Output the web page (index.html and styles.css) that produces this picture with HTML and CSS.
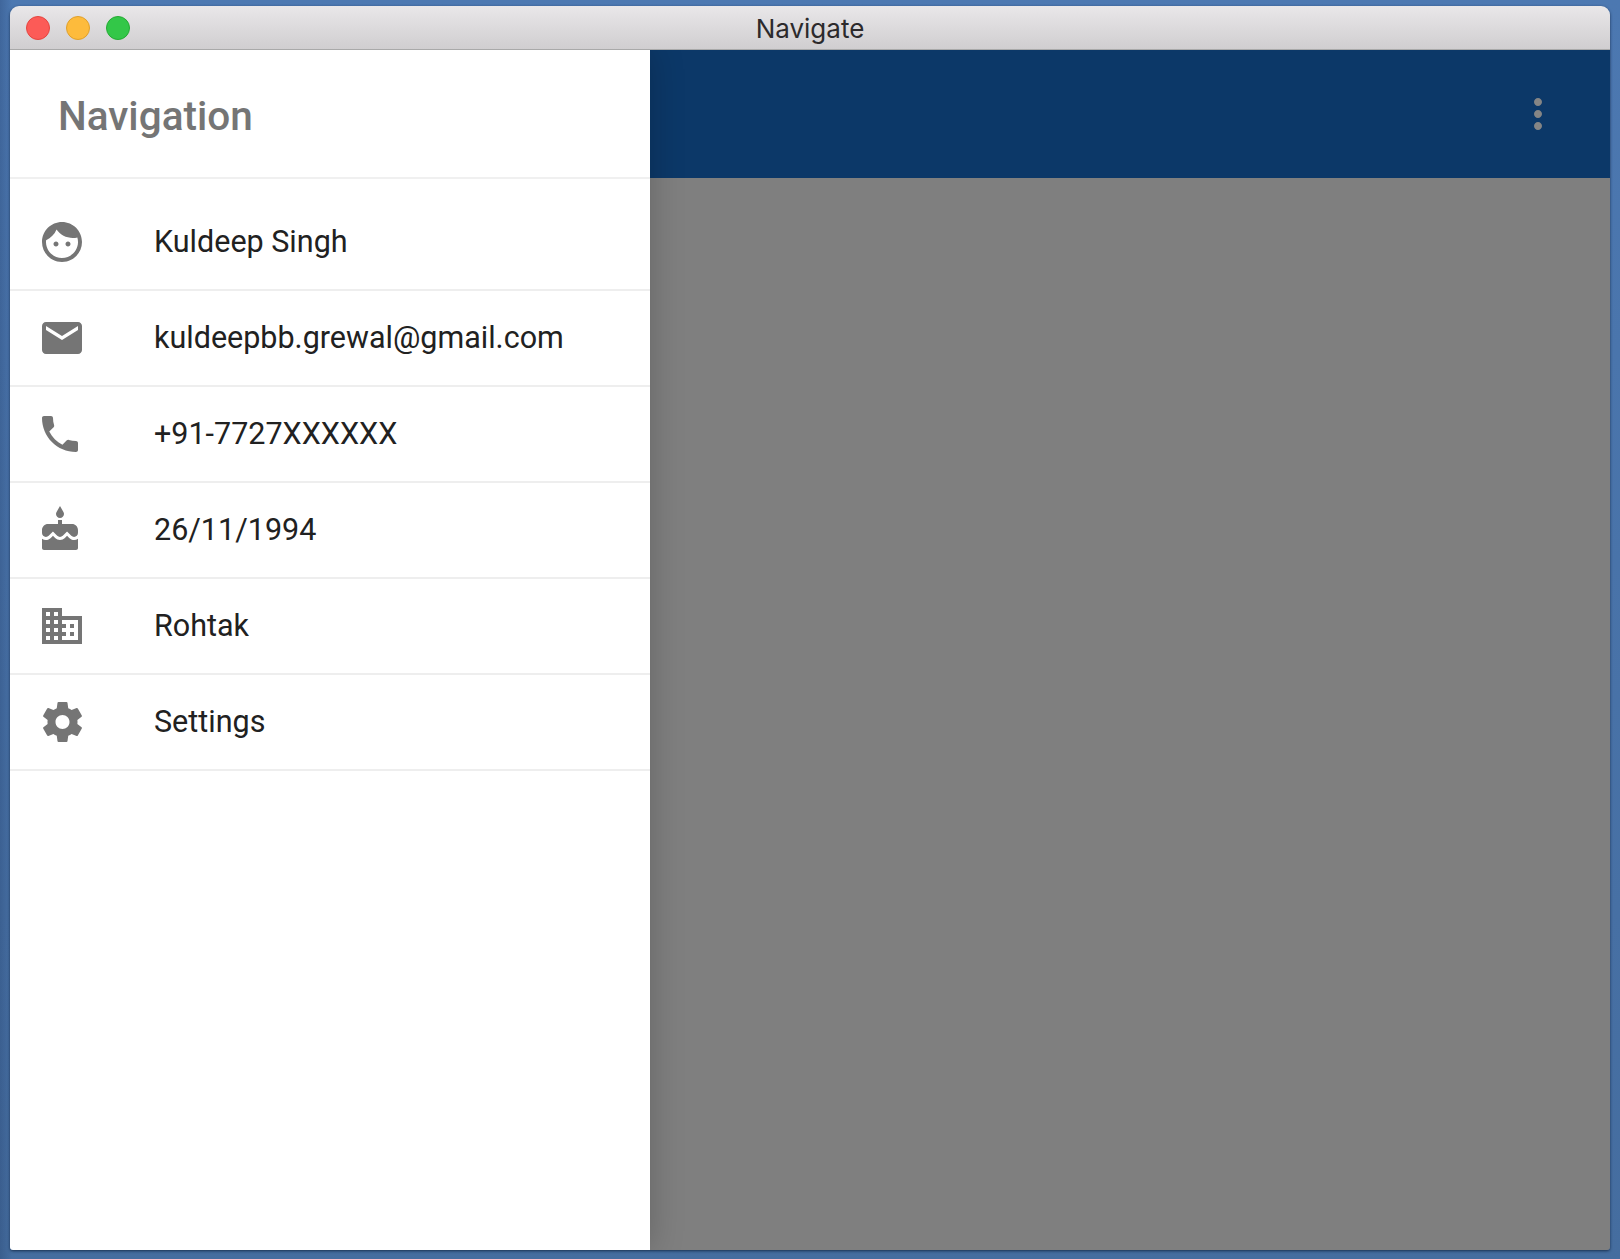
FILE: index.html
```html
<!DOCTYPE html>
<html lang="en">
<head>
<meta charset="utf-8">
<title>Navigate</title>
<link rel="stylesheet" href="styles.css">
</head>
<body>
<div class="window">
  <header class="titlebar">
    <div class="lights">
      <span class="light red"></span>
      <span class="light yellow"></span>
      <span class="light green"></span>
    </div>
    <div class="wintitle">Navigate</div>
  </header>
  <div class="content">
    <aside class="drawer">
      <div class="drawer-head">Navigation</div>
      <ul class="list">
        <li class="item"><svg class="icon" viewBox="0 0 24 24"><path d="M9 11.75c-.69 0-1.25.56-1.25 1.25s.56 1.25 1.25 1.25 1.25-.56 1.25-1.25-.56-1.25-1.25-1.25zm6 0c-.69 0-1.25.56-1.25 1.25s.56 1.25 1.25 1.25 1.25-.56 1.25-1.25-.56-1.25-1.25-1.25zM12 2C6.48 2 2 6.48 2 12s4.48 10 10 10 10-4.48 10-10S17.52 2 12 2zm0 18c-4.41 0-8-3.59-8-8 0-.29.02-.58.05-.86 2.36-1.05 4.23-2.98 5.21-5.37C11.07 8.33 14.05 10 17.42 10c.78 0 1.53-.09 2.25-.26.21.71.33 1.47.33 2.26 0 4.41-3.59 8-8 8z"/></svg><span class="label">Kuldeep Singh</span></li>
        <li class="item"><svg class="icon" viewBox="0 0 24 24"><path d="M20 4H4c-1.1 0-1.99.9-1.99 2L2 18c0 1.1.9 2 2 2h16c1.1 0 2-.9 2-2V6c0-1.1-.9-2-2-2zm0 4l-8 5-8-5V6l8 5 8-5v2z"/></svg><span class="label">kuldeepbb.grewal@gmail.com</span></li>
        <li class="item"><svg class="icon" viewBox="1 0 24 24"><path d="M6.62 10.79c1.44 2.83 3.76 5.14 6.59 6.59l2.2-2.2c.27-.27.67-.36 1.02-.24 1.12.37 2.33.57 3.57.57.55 0 1 .45 1 1V20c0 .55-.45 1-1 1-9.39 0-17-7.61-17-17 0-.55.45-1 1-1h3.5c.55 0 1 .45 1 1 0 1.25.2 2.45.57 3.57.11.35.03.74-.25 1.02l-2.2 2.2z"/></svg><span class="label">+91-7727XXXXXX</span></li>
        <li class="item"><svg class="icon" viewBox="1 0 24 24"><path d="M12 6c1.11 0 2-.9 2-2 0-.38-.1-.73-.29-1.03L12 0l-1.71 2.97c-.19.3-.29.65-.29 1.03 0 1.1.9 2 2 2zm4.6 9.99l-1.07-1.07-1.08 1.07c-1.3 1.3-3.58 1.31-4.89 0l-1.07-1.07-1.09 1.07C6.75 16.64 5.88 17 4.96 17c-.73 0-1.4-.23-1.96-.61V21c0 .55.45 1 1 1h16c.55 0 1-.45 1-1v-4.61c-.56.38-1.23.61-1.96.61-.92 0-1.79-.36-2.44-1.01zM18 9h-5V7h-2v2H6c-1.66 0-3 1.34-3 3v1.54c0 1.08.88 1.96 1.96 1.96.52 0 1.02-.2 1.38-.57l2.14-2.13 2.13 2.13c.74.74 2.03.74 2.77 0l2.14-2.13 2.13 2.13c.37.37.86.57 1.38.57 1.08 0 1.96-.88 1.96-1.96V12C21 10.34 19.66 9 18 9z"/></svg><span class="label">26/11/1994</span></li>
        <li class="item"><svg class="icon" viewBox="0 0 24 24"><path d="M12 7V3H2v18h20V7H12zM6 19H4v-2h2v2zm0-4H4v-2h2v2zm0-4H4V9h2v2zm0-4H4V5h2v2zm4 12H8v-2h2v2zm0-4H8v-2h2v2zm0-4H8V9h2v2zm0-4H8V5h2v2zm10 12h-8v-2h2v-2h-2v-2h2v-2h-2V9h8v10zm-2-8h-2v2h2v-2zm0 4h-2v2h2v-2z"/></svg><span class="label">Rohtak</span></li>
        <li class="item"><svg class="icon" viewBox="-.25 0 24 24"><path d="M19.43 12.98c.04-.32.07-.64.07-.98s-.03-.66-.07-.98l2.11-1.65c.19-.15.24-.42.12-.64l-2-3.46c-.12-.22-.39-.3-.61-.22l-2.49 1c-.52-.4-1.08-.73-1.69-.98l-.38-2.65C14.46 2.18 14.25 2 14 2h-4c-.25 0-.46.18-.49.42l-.38 2.65c-.61.25-1.17.59-1.69.98l-2.49-1c-.23-.09-.49 0-.61.22l-2 3.46c-.13.22-.07.49.12.64l2.11 1.65c-.04.32-.07.65-.07.98s.03.66.07.98l-2.11 1.65c-.19.15-.24.42-.12.64l2 3.46c.12.22.39.3.61.22l2.49-1c.52.4 1.08.73 1.69.98l.38 2.65c.03.24.24.42.49.42h4c.25 0 .46-.18.49-.42l.38-2.65c.61-.25 1.17-.59 1.69-.98l2.49 1c.23.09.49 0 .61-.22l2-3.46c.12-.22.07-.49-.12-.64l-2.11-1.65zM12 15.5c-1.93 0-3.5-1.57-3.5-3.5s1.57-3.5 3.5-3.5 3.5 1.57 3.5 3.5-1.57 3.5-3.5 3.5z"/></svg><span class="label">Settings</span></li>
      </ul>
    </aside>
    <main class="main">
      <div class="appbar">
        <svg class="more" viewBox="0 0 24 24"><path d="M12 8c1.1 0 2-.9 2-2s-.9-2-2-2-2 .9-2 2 .9 2 2 2zm0 2c-1.1 0-2 .9-2 2s.9 2 2 2 2-.9 2-2-.9-2-2-2zm0 6c-1.1 0-2 .9-2 2s.9 2 2 2 2-.9 2-2-.9-2-2-2z"/></svg>
      </div>
      <div class="scrim"></div>
    </main>
  </div>
</div>
</body>
</html>
```
FILE: styles.css
```css
* { box-sizing: border-box; }
html, body { margin: 0; height: 100%; }
body {
  width: 1620px;
  height: 1259px;
  overflow: hidden;
  padding: 6px 10px 9px;
  background:
    linear-gradient(90deg, rgba(20, 40, 80, .22) 0, rgba(20, 40, 80, 0) 12px),
    linear-gradient(180deg, #4c78b1 0%, #456d9f 100%);
  font-family: Roboto, "Liberation Sans", sans-serif;
}
.window {
  width: 1600px;
  height: 1244px;
  display: flex;
  flex-direction: column;
  border-radius: 9px 9px 3px 3px;
  overflow: hidden;
  box-shadow: 0 1px 3px rgba(10, 25, 50, .75);
}
.titlebar {
  height: 44px;
  flex: none;
  display: flex;
  align-items: center;
  position: relative;
  z-index: 2;
  background: linear-gradient(#e9e7e9, #d0ced0);
  border-bottom: 1px solid #a9a9a9;
}
.lights { display: flex; gap: 16px; padding-left: 16px; }
.light { width: 24px; height: 24px; border-radius: 50%; border: 1px solid; }
.red { background: #fc5b57; border-color: #e5453f; }
.yellow { background: #fdbb3c; border-color: #e0a02b; }
.green { background: #33c748; border-color: #24ab33; }
.wintitle {
  position: absolute;
  inset: 0;
  display: flex;
  align-items: center;
  justify-content: center;
  padding-top: 2px;
  font-family: Inter, sans-serif;
  font-size: 26px;
  color: #2c2a2c;
}
.content { flex: 1; display: flex; min-height: 0; }
.drawer {
  width: 640px;
  flex: none;
  background: #fff;
  display: flex;
  flex-direction: column;
  position: relative;
  z-index: 1;
  box-shadow: 0 0 32px rgba(0, 0, 0, .22);
}
.drawer-head {
  height: 129px;
  flex: none;
  display: flex;
  align-items: center;
  padding: 4px 0 0 48px;
  font-size: 40.5px;
  font-weight: 500;
  color: #757575;
  border-bottom: 2px solid #f0f0f0;
}
.list { list-style: none; margin: 0; padding: 16px 0 0; }
.item {
  height: 96px;
  display: flex;
  align-items: center;
  padding-left: 28px;
  border-bottom: 2px solid #eeeeee;
}
.icon { width: 48px; height: 48px; fill: #757575; flex: none; }
.label { margin-left: 68px; padding-bottom: 2px; font-size: 30.5px; color: #212121; }
.main { flex: 1; display: flex; flex-direction: column; min-width: 0; }
.appbar {
  height: 128px;
  flex: none;
  display: flex;
  align-items: center;
  justify-content: flex-end;
  padding-right: 48px;
  background: #0c3868;
}
.more { width: 48px; height: 48px; fill: #858585; }
.scrim { flex: 1; background: #7f7f7f; }
```
